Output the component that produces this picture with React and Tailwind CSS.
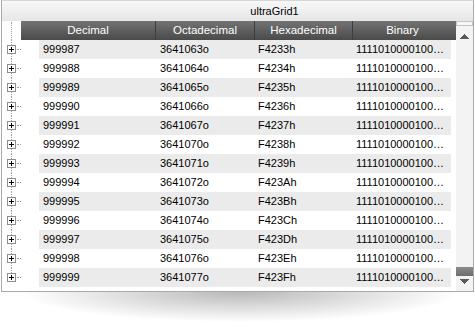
import React from "react";

const rows = [
  ["999987", "3641063o", "F4233h"],
  ["999988", "3641064o", "F4234h"],
  ["999989", "3641065o", "F4235h"],
  ["999990", "3641066o", "F4236h"],
  ["999991", "3641067o", "F4237h"],
  ["999992", "3641070o", "F4238h"],
  ["999993", "3641071o", "F4239h"],
  ["999994", "3641072o", "F423Ah"],
  ["999995", "3641073o", "F423Bh"],
  ["999996", "3641074o", "F423Ch"],
  ["999997", "3641075o", "F423Dh"],
  ["999998", "3641076o", "F423Eh"],
  ["999999", "3641077o", "F423Fh"],
];

const PlusBox = () => (
  <div className="w-[9px] h-[9px] border border-[#8e8e8e] bg-white flex items-center justify-center shrink-0">
    <svg width="7" height="7" viewBox="0 0 7 7" shapeRendering="crispEdges">
      <rect x="1" y="3" width="5" height="1" fill="#000" />
      <rect x="3" y="1" width="1" height="5" fill="#000" />
    </svg>
  </div>
);

const GutterCell = ({ last }) => (
  <div className="h-[19px] flex">
    <div className="w-[5px]" />
    <div className="w-[9px] flex flex-col items-center">
      <div className="flex-1 w-0 border-l border-dotted border-[#a0a0a0]" />
      <PlusBox />
      <div
        className={
          last
            ? "flex-1 w-0"
            : "flex-1 w-0 border-l border-dotted border-[#a0a0a0]"
        }
      />
    </div>
    <div className="w-[5px] flex items-center">
      <div className="w-full h-0 border-t border-dotted border-[#a0a0a0] ml-[1px]" />
    </div>
  </div>
);

const Arrow = ({ down }) => (
  <svg width="9" height="5" viewBox="0 0 9 5" shapeRendering="crispEdges">
    <path d={down ? "M0 0h9L4.5 5z" : "M0 5h9L4.5 0z"} fill="#5a5a5a" />
  </svg>
);

export default function App() {
  return (
    <div className="w-[475px] h-[330px] bg-white font-['Liberation_Sans',Arial,sans-serif] text-black">
      <div className="ml-[1px] w-[473px] border border-[#a9a9a9] border-t-[#d6d6d6] bg-white flex flex-col">
        {/* caption */}
        <div className="h-[20px] bg-linear-to-b from-[#f8f8f8] to-[#e6e6e6] flex items-center justify-center pl-[74px] text-[11px]">
          ultraGrid1
        </div>

        <div className="flex">
          {/* tree gutter */}
          <div className="w-[19px] flex flex-col">
            <div className="h-[19px] flex">
              <div className="w-[9px]" />
              <div className="mt-[1px] h-[18px] w-0 border-l border-dotted border-[#a0a0a0]" />
            </div>
            {rows.map((r, i) => (
              <GutterCell key={r[0]} last={i === rows.length - 1} />
            ))}
            <div className="h-[4px]" />
          </div>

          {/* grid */}
          <div className="w-[435px] flex flex-col">
            <div className="h-[19px] flex bg-linear-to-b from-[#747474] to-[#4a4a4a] text-white text-[11.5px]">
              <div className="w-[134px] flex items-center justify-center">Decimal</div>
              <div className="w-[99px] flex items-center justify-center border-l border-[#3e3e3e]">Octadecimal</div>
              <div className="w-[98px] flex items-center justify-center border-l border-[#3e3e3e]">Hexadecimal</div>
              <div className="flex-1 flex items-center justify-center border-l border-[#3e3e3e] pr-[4px]">Binary</div>
            </div>
            {rows.map((r, i) => (
              <div key={r[0]} className="h-[19px] flex text-[11px] leading-[19px]">
                <div className="w-[18px] bg-white" />
                <div className={`w-[412px] flex ${i % 2 === 0 ? "bg-[#ebebeb]" : "bg-white"}`}>
                  <div className="w-[116px] pl-[4px] pb-[2px]">{r[0]}</div>
                  <div className="w-[99px] pl-[5px] pb-[2px]">{r[1]}</div>
                  <div className="w-[98px] pl-[4px] pb-[2px]">{r[2]}</div>
                  <div className="flex-1 pl-[4px] pb-[2px] whitespace-nowrap">1111010000100…</div>
                </div>
              </div>
            ))}
            <div className="h-[4px]" />
          </div>

          {/* scrollbar */}
          <div className="w-[17px] flex flex-col bg-[#f3f3f3]">
            <div className="h-[5px] border border-[#c4c4c4] bg-[#f7f7f7]" />
            <div className="h-[16px] flex items-center justify-center pt-[5px]">
              <Arrow />
            </div>
            <div className="flex-1" />
            <div className="h-[9px] bg-linear-to-b from-[#8c8c8c] to-[#6c6c6c]" />
            <div className="h-[15px] flex items-center justify-center pb-[4px]">
              <Arrow down />
            </div>
          </div>
        </div>
      </div>
      <div className="ml-[20px] w-[440px] h-[30px] bg-[radial-gradient(ellipse_50%_100%_at_50%_0%,rgba(0,0,0,0.28),rgba(0,0,0,0)_100%)]" />
    </div>
  );
}
